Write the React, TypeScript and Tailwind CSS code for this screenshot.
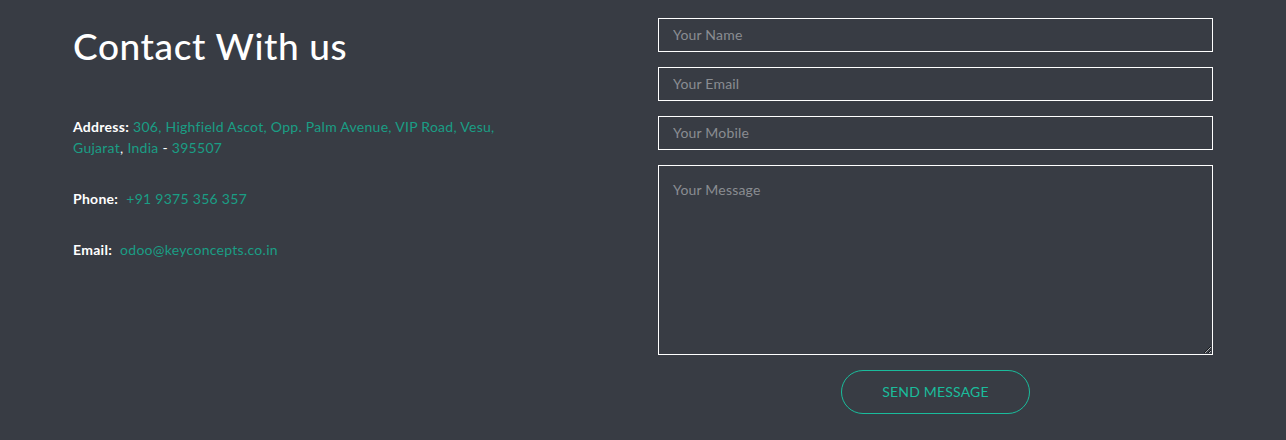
import React from "react";

export default function App() {
  const font = { fontFamily: "Lato, 'Open Sans', sans-serif" };
  return (
    <div className="w-full h-[440px] bg-[#383c44]" style={font}>
      <div className="w-[1170px] mx-auto flex">
        <div className="w-[585px] px-[15px] pt-[24px]">
          <h2 className="text-[37px] leading-[44px] text-white font-medium tracking-[0.6px]">Contact With us</h2>
          <div className="mt-[48px] w-[470px] text-[14px] leading-[21px] text-white tracking-[0.28px]">
            <p>
              <span className="font-bold">Address:</span>{" "}
              <span className="text-[#1a9e84]">306, Highfield Ascot, Opp. Palm Avenue, VIP Road, Vesu,</span>
              <br />
              <span className="text-[#1a9e84]">Gujarat</span>, <span className="text-[#1a9e84]">India</span> -{" "}
              <span className="text-[#1a9e84]">395507</span>
            </p>
            <p className="mt-[30px]">
              <span className="font-bold">Phone:</span>
              <span className="text-[#1a9e84] ml-[8px]">+91 9375 356 357</span>
            </p>
            <p className="mt-[30px]">
              <span className="font-bold">Email:</span>
              <span className="text-[#1a9e84] ml-[8px]">odoo@keyconcepts.co.in</span>
            </p>
          </div>
        </div>
        <div className="w-[585px] px-[15px] pt-[18px] flex flex-col">
          {["Your Name", "Your Email", "Your Mobile"].map((p) => (
            <input
              key={p}
              placeholder={p}
              className="h-[34px] mb-[15px] border border-white bg-transparent px-[14px] pb-[1px] text-[14px] tracking-[0.2px] text-white placeholder:text-[#8a8d92] outline-none"
              style={font}
            />
          ))}
          <textarea
            placeholder="Your Message"
            className="h-[190px] border border-white bg-transparent px-[14px] py-[14px] text-[14px] leading-[20px] tracking-[0.2px] text-white placeholder:text-[#8a8d92] outline-none"
            style={font}
          />
          <div className="flex justify-center mt-[15px]">
            <button
              className="w-[189px] h-[44px] pb-[1px] rounded-full border border-[#1abc9c] text-[#1abc9c] text-[14px] tracking-[0.2px] uppercase"
              style={font}
            >
              Send Message
            </button>
          </div>
        </div>
      </div>
    </div>
  );
}
